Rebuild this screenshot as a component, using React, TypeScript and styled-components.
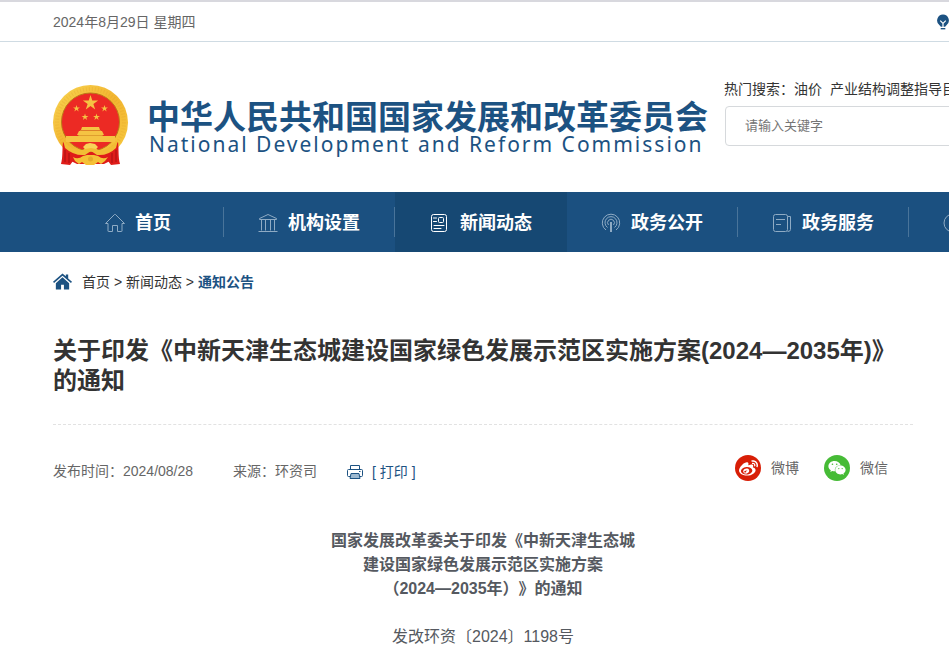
import React from "react";
import styled, { createGlobalStyle, css } from "styled-components";
import { FaWeibo, FaWeixin } from "react-icons/fa";

const blue = "#1c5282";
const navBlue = "#1b5080";
const navActive = "#164873";

const GlobalStyle = createGlobalStyle`
  *, *::before, *::after { box-sizing: border-box; }
  body {
    margin: 0;
    background: #fff;
    color: #333;
    font: 14px/20px "Liberation Sans", "Noto Sans CJK SC", sans-serif;
    text-spacing-trim: space-all;
    overflow-x: hidden;
  }
  a { color: inherit; text-decoration: none; }
  h1, h2, p, ul, ol { margin: 0; padding: 0; }
  ul, ol { list-style: none; }
`;

const TopBar = styled.div`
  display: flex;
  justify-content: space-between;
  align-items: center;
  height: 42px;
  padding-left: 53px;
  border-top: 2px solid #d8d8de;
  border-bottom: 1px solid #cfdbe3;
  color: #666;
  overflow: hidden;
`;

const BulbLink = styled.a`
  flex: none;
  display: flex;
  width: 12px;
  overflow: hidden;
`;

const Masthead = styled.header`
  display: flex;
  align-items: flex-start;
  height: 150px;
  padding: 37px 0 0 52px;
  overflow: hidden;
`;

const Brand = styled.a`
  flex: none;
  display: flex;
  gap: 17px;
  align-items: flex-start;
  width: 672px;
  padding-top: 5px;
  color: ${blue};
  svg { flex: none; }
`;

const BrandText = styled.span`
  display: flex;
  flex-direction: column;
  padding-top: 18px;
  white-space: nowrap;
`;

const BrandName = styled.strong`
  font-size: 33px;
  line-height: 32px;
`;

const BrandEnglish = styled.span`
  padding-left: 2px;
  font-family: "Noto Sans", sans-serif;
  font-size: 21px;
  line-height: 20px;
  letter-spacing: 2px;
`;

const SearchArea = styled.form`
  flex: 1 0 360px;
  display: flex;
  flex-direction: column;
  gap: 7px;
`;

const HotSearch = styled.div`
  display: flex;
  gap: 8px;
  white-space: nowrap;
`;

const SearchInput = styled.input`
  width: 100%;
  height: 40px;
  margin-left: 1px;
  padding: 0 19px 2px;
  border: 1px solid #d6d9dc;
  border-radius: 4px;
  font: inherit;
  font-size: 13px;
  color: #333;
  &::placeholder { color: #757575; opacity: 1; }
`;

const Nav = styled.nav`
  background: ${navBlue};
  overflow: hidden;
`;

const NavList = styled.ul`
  display: flex;
  height: 60px;
  padding-left: 53px;
`;

const NavItem = styled.li<{ $active?: boolean }>`
  flex: 0 0 ${(p) => (p.$active ? 172 : 171)}px;
  display: flex;
  align-items: center;
  ${(p) =>
    p.$active
      ? css`background: ${navActive};`
      : css`
          &::after {
            content: "";
            width: 1px;
            height: 30px;
            background: #49749a;
          }
        `}
`;

const NavLink = styled.a<{ $active?: boolean }>`
  flex: 1;
  display: flex;
  justify-content: center;
  align-items: center;
  gap: 10px;
  height: 60px;
  padding-top: 1px;
  color: #fff;
  font-size: 18px;
  font-weight: bold;
  white-space: nowrap;
  svg { flex: none; color: ${(p) => (p.$active ? "#fff" : "#8fabc4")}; }
`;

const Main = styled.main`
  padding: 20px 36px 9px 53px;
`;

const Breadcrumb = styled.nav`
  display: flex;
  align-items: center;
  gap: 10px;
  white-space: pre;
`;

const Current = styled.a`
  color: ${blue};
  font-weight: bold;
`;

const Title = styled.h1`
  margin-top: 44px;
  padding-bottom: 28px;
  border-bottom: 1px dashed #e2e2e2;
  font-size: 24px;
  line-height: 30px;
`;

const Meta = styled.div`
  display: flex;
  align-items: center;
  padding: 35px 25px 0 0;
  color: #666;
  white-space: nowrap;
`;

const Published = styled.span`
  margin-right: 40px;
`;

const PrintButton = styled.button`
  display: flex;
  align-items: center;
  gap: 9px;
  margin: 2px 0 0 30px;
  padding: 0;
  border: 0;
  background: none;
  color: ${blue};
  font: inherit;
  cursor: pointer;
`;

const Share = styled.div`
  display: flex;
  gap: 25px;
  margin: -6px 0 0 auto;
`;

const ShareLink = styled.a`
  display: flex;
  align-items: center;
  gap: 10px;
`;

const Badge = styled.span<{ $color: string }>`
  display: grid;
  place-items: center;
  width: 26px;
  height: 26px;
  border-radius: 50%;
  background: ${(p) => p.$color};
  color: #fff;
`;

const Notice = styled.article`
  margin-top: 47px;
  color: #555960;
  font-size: 16px;
  line-height: 24px;
  text-align: center;
`;

const NoticeTitle = styled.h2`
  font-size: 16px;
  line-height: 24px;
`;

const DocumentNumber = styled.p`
  margin-top: 24px;
`;

const starPoints = (cx: number, cy: number, r: number) =>
  Array.from({ length: 10 }, (_, i) => {
    const a = (i * Math.PI) / 5 - Math.PI / 2;
    const d = i % 2 ? r * 0.38 : r;
    return `${(cx + d * Math.cos(a)).toFixed(2)},${(cy + d * Math.sin(a)).toFixed(2)}`;
  }).join(" ");

const Emblem = () => (
  <svg width="78" height="82" viewBox="0 0 78 82" aria-hidden="true">
    <defs>
      <linearGradient id="gold" x1="0" y1="0" x2="1" y2="1">
        <stop offset="0" stopColor="#f8d552" />
        <stop offset="0.5" stopColor="#f2b530" />
        <stop offset="1" stopColor="#f7cb41" />
      </linearGradient>
    </defs>
    <circle cx="38.5" cy="38.5" r="37.5" fill="url(#gold)" />
    <circle cx="38.5" cy="38.5" r="33.5" fill="none" stroke="#df9d25" strokeWidth="4" strokeDasharray="1 2" opacity="0.25" />
    <circle cx="38.5" cy="38" r="29" fill="#ec2a24" stroke="#bd7a19" strokeWidth="1" />
    <g fill="#f5c343">
      <polygon points={starPoints(38.5, 19, 8)} />
      <polygon points={starPoints(24.5, 24.5, 3.6)} />
      <polygon points={starPoints(52.5, 24.5, 3.6)} />
      <polygon points={starPoints(33, 33, 3.6)} />
      <polygon points={starPoints(44.5, 33, 3.6)} />
      <path d="M30 43h17l1 3H29z" />
      <path d="M27 47h23l2 4H25z" />
      <path d="M27 51h23v5H27z" />
      <path d="M14 52h49v6H14z" />
    </g>
    <path d="M28 46.500h21M26 51.500h25" stroke="#d9962a" strokeWidth="0.8" />
    <path d="M11 58l7 5 10 7-4 3-6 8-9-1c2-7 1-14 2-22zM66 58l-7 5-10 7 4 3 6 8 9-1c-2-7-1-14-2-22z" fill="#df1c19" />
    <path d="M20 68h37l3 8-8 4H25l-8-4z" fill="#df1c19" />
    <path d="M13 66v12M17 69v10M64 66v12M60 69v10" stroke="#a70e13" strokeWidth="1" />
    <path d="M11 56q9 11 20 10l5-5h5l5 5q11 1 20-10l-2 8q-8 8-19 7l-6-4-6 4q-11 1-20-7z" fill="#f2bd35" />
    <path d="M31 63l3-3 4-1 5 1 3 3-2 2-5-1-6 1z" fill="#f8d458" />
    <path d="M21 73q5 3 10-1l4-1h7l4 1q5 4 10 1l-3 4-4 3-3-2-4 3h-8l-4-3-3 2-4-3z" fill="#f5c137" />
    <circle cx="38.5" cy="75" r="2.500" fill="#e5a92c" />
  </svg>
);

const Line: React.FC<{ size?: number; children: React.ReactNode }> = ({ size = 20, children }) => (
  <svg width={size} height={size} viewBox={`0 0 ${size} ${size}`} fill="none" stroke="currentColor" aria-hidden="true">
    {children}
  </svg>
);

const HouseIcon = () => (
  <Line>
    <path d="M.5 10.5L9.500 1.500h1l9 9H17v7.500q0 .5-.5.5H12.500V12.500h-5v6H3.500q-.5 0-.5-.5v-7.500z" strokeLinejoin="round" />
  </Line>
);
const HallIcon = () => (
  <Line>
    <path d="M1.500 5.500L10 1.500l8.500 4v1h-17zM.5 18.500h19M3.500 6.500v11M7.500 6.500v11M12.500 6.500v11M16.500 6.500v11" />
  </Line>
);
const NewsIcon = () => (
  <Line>
    <rect x="1.5" y="1.5" width="15" height="17" rx="2" />
    <path d="M3.500 5h3M3.500 8.500h3M4 12.500h10M4 15.500h7" strokeLinecap="round" />
    <rect x="8.5" y="4.5" width="5" height="5" rx="1" />
  </Line>
);
const SignalIcon = () => (
  <Line>
    <path d="M5 17a8.700 8.700 0 1 1 10 0M6.500 14.500a6 6 0 1 1 7 0M7.500 12a3.400 3.400 0 1 1 5 0M9.500 9v10M10.500 9v10" />
  </Line>
);
const ServiceIcon = () => (
  <Line>
    <rect x="1.5" y="1.5" width="14" height="17" rx="2" />
    <path d="M4 6.500h9M4 11.500h5M15.500 3.500h3v13q0 2-3 2" />
  </Line>
);
const RoundIcon = () => (
  <Line>
    <circle cx="10" cy="10" r="9" />
    <path d="M10 5v6l4 2" />
  </Line>
);

const HomeIcon = () => (
  <svg width="19" height="18" viewBox="0 0 20 18" fill={blue} aria-hidden="true">
    <path d="M0 8.800L10 0l3.500 3V1h2.500v4.300l4 3.500-1.100 1.200L10 2.300 1.100 10z" />
    <path d="M3 10.200l7-6.100 7 6.100V17h-5.500v-5h-3v5H3z" />
  </svg>
);

const PrinterIcon = () => (
  <Line size={16}>
    <path d="M3.500 5.500v-4h9v4M3.500 12.500h-2q-1 0-1-1v-5q0-1 1-1h13q1 0 1 1v5q0 1-1 1h-2" />
    <path d="M4 9.500h8l1 5H3z" fill="#9db9d0" />
    <path d="M12 7.500h1.500" />
  </Line>
);

const BulbIcon = () => (
  <svg width="13" height="18" viewBox="0 0 13 18" fill={blue} aria-hidden="true">
    <path d="M6.500 1a6.300 6.300 0 0 0-4 11.200l1.700 2h4.600l1.700-2A6.300 6.300 0 0 0 6.500 1z" />
    <path d="M3.500 7.500l3 3 3-3M6.500 10.500v4" fill="none" stroke="#fff" strokeWidth="1.3" />
    <path d="M4 15.500h5v1.500H4z" />
  </svg>
);

const navItems = [
  { label: "首页", Icon: HouseIcon },
  { label: "机构设置", Icon: HallIcon },
  { label: "新闻动态", Icon: NewsIcon, active: true },
  { label: "政务公开", Icon: SignalIcon },
  { label: "政务服务", Icon: ServiceIcon },
  { label: "互动交流", Icon: RoundIcon },
];

export default function App() {
  return (
    <>
      <GlobalStyle />
      <TopBar>
        <span>2024年8月29日 星期四</span>
        <BulbLink href="#" aria-label="无障碍">
          <BulbIcon />
        </BulbLink>
      </TopBar>
      <Masthead>
        <Brand href="#">
          <Emblem />
          <BrandText>
            <BrandName>中华人民共和国国家发展和改革委员会</BrandName>
            <BrandEnglish>National Development and Reform Commission</BrandEnglish>
          </BrandText>
        </Brand>
        <SearchArea>
          <HotSearch>
            <span>热门搜索：<a href="#">油价</a></span>
            <a href="#">产业结构调整指导目录</a>
          </HotSearch>
          <SearchInput type="text" placeholder="请输入关键字" aria-label="搜索" />
        </SearchArea>
      </Masthead>
      <Nav>
        <NavList>
          {navItems.map(({ label, Icon, active }) => (
            <NavItem key={label} $active={active}>
              <NavLink href="#" $active={active}>
                <Icon />
                {label}
              </NavLink>
            </NavItem>
          ))}
        </NavList>
      </Nav>
      <Main>
        <Breadcrumb aria-label="当前位置">
          <HomeIcon />
          <span>
            <a href="#">首页</a>{" > "}<a href="#">新闻动态</a>{" > "}<Current href="#">通知公告</Current>
          </span>
        </Breadcrumb>
        <Title>关于印发《中新天津生态城建设国家绿色发展示范区实施方案(2024—2035年)》的通知</Title>
        <Meta>
          <Published>发布时间：2024/08/28</Published>
          <span>来源：环资司</span>
          <PrintButton type="button">
            <PrinterIcon />
            [ 打印 ]
          </PrintButton>
          <Share>
            <ShareLink href="#">
              <Badge $color="#d81e06"><FaWeibo size={19} /></Badge>
              微博
            </ShareLink>
            <ShareLink href="#">
              <Badge $color="#46bb36"><FaWeixin size={18} /></Badge>
              微信
            </ShareLink>
          </Share>
        </Meta>
        <Notice>
          <NoticeTitle>
            国家发展改革委关于印发《中新天津生态城
            <br />
            建设国家绿色发展示范区实施方案
            <br />
            （2024—2035年）》的通知
          </NoticeTitle>
          <DocumentNumber>发改环资〔2024〕1198号</DocumentNumber>
        </Notice>
      </Main>
    </>
  );
}
